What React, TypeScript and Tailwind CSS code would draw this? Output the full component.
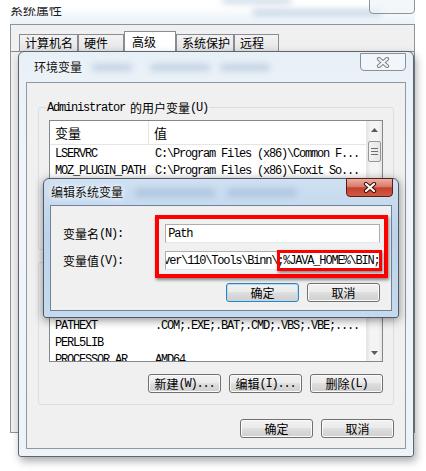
import clsx from "clsx";

const zh = "font-['Noto_Sans_CJK_SC',sans-serif] text-[12px] leading-none";
const mono = "font-['Liberation_Mono','Noto_Sans_CJK_SC',monospace] text-[12px] leading-none tracking-[-1.2px]";

function CloseX({ active }: { active?: boolean }) {
  return (
    <svg width="14" height="11" viewBox="0 0 14 11">
      <path d="M3 2 L11 9 M11 2 L3 9" stroke={active ? "#3b0d08" : "#7d8288"} strokeWidth="4.2" strokeLinecap="round" />
      <path d="M3 2 L11 9 M11 2 L3 9" stroke={active ? "#ffffff" : "#f3f4f6"} strokeWidth="2.2" strokeLinecap="round" />
    </svg>
  );
}

// blurred shapes seen through the aero glass
function Blur({ w, className }: { w: number; className?: string }) {
  return <div className={clsx("h-[7px] rounded-full bg-[#4b77ad]/25 blur-[3px]", className)} style={{ width: w }} />;
}

function Btn({ label, hint, focus }: { label: string; hint?: string; focus?: boolean }) {
  return (
    <div
      className={clsx(
        "flex h-[19px] w-[73px] items-center justify-center rounded-[3px] border bg-[linear-gradient(#f2f2f2,#ebebeb_45%,#dddddd_52%,#cfcfcf)] text-black",
        focus ? "border-[#3c7fb1] shadow-[inset_0_0_0_1px_#a8e0f8]" : "border-[#707070] shadow-[inset_0_0_0_1px_#fbfbfb]"
      )}
    >
      <span className={zh}>{label}</span>
      {hint && <span className={mono}>{hint}</span>}
    </div>
  );
}

function Arrow({ down }: { down?: boolean }) {
  return (
    <div className="flex h-[17px] items-center justify-center">
      <svg width="7" height="4" viewBox="0 0 7 4">
        <path d={down ? "M0 0 L7 0 L3.5 4Z" : "M0 4 L7 4 L3.5 0Z"} fill="#5a5a5a" />
      </svg>
    </div>
  );
}

function ScrollBar({ thumb }: { thumb?: boolean }) {
  return (
    <div className="flex w-[16px] flex-col border-l border-[#e8e8e8] bg-[linear-gradient(90deg,#e6e6e6,#f4f4f4_25%,#f4f4f4_75%,#e6e6e6)]">
      <Arrow />
      {thumb && (
        <div className="mx-[1px] mt-[3px] flex h-[21px] flex-col items-center justify-center gap-[2px] rounded-[2px] border border-[#979797] bg-[linear-gradient(90deg,#f3f3f3,#e6e6e6)]">
          <div className="h-[1px] w-[7px] bg-[#6f6f6f]" />
          <div className="h-[1px] w-[7px] bg-[#6f6f6f]" />
          <div className="h-[1px] w-[7px] bg-[#6f6f6f]" />
        </div>
      )}
      <div className="flex-1" />
      <Arrow down />
    </div>
  );
}

function VarList({ rows, thumb, skip = 0 }: { rows: [string, string][]; thumb?: boolean; skip?: number }) {
  return (
    <div className="flex h-[87px] border border-[#828790] bg-white">
      <div className="flex-1 overflow-hidden">
        <div className="flex h-[24px] border-b border-[#e5e5e5]">
          <div className={clsx(zh, "flex w-[99px] items-center border-r border-[#e5e5e5] pl-[5px] text-[13px]")}>变量</div>
          <div className={clsx(zh, "flex flex-1 items-center pl-[5px] text-[13px]")}>值</div>
        </div>
        {/* rows hidden behind the edit dialog */}
        <div style={{ height: skip * 17 }} />
        {rows.map(([name, value]) => (
          <div key={name} className="flex h-[17px] items-center whitespace-nowrap text-black">
            <div className={clsx(mono, "w-[100px] overflow-hidden pl-[5px]")}>{name}</div>
            <div className={clsx(mono, "flex-1 overflow-hidden pl-[5px]")}>{value}</div>
          </div>
        ))}
      </div>
      <ScrollBar thumb={thumb} />
    </div>
  );
}

function Group({ children, title, className }: { children: React.ReactNode; title?: React.ReactNode; className?: string }) {
  return (
    <div className={clsx("relative rounded-[3px] border border-[#d5dfe5] px-[10px] pb-[11px] pt-[12px]", className)}>
      {title && <div className="absolute left-[7px] top-[-8px] flex h-[16px] items-center bg-[#f0f0f0] px-[1px]">{title}</div>}
      {children}
    </div>
  );
}

const tabs = [
  { t: "计算机名", w: "w-[59px]" },
  { t: "硬件", w: "w-[46px]" },
  { t: "高级", w: "w-[52px]", on: true },
  { t: "系统保护", w: "w-[58px]" },
  { t: "远程", w: "w-[45px]" },
];

export default function App() {
  return (
    <div className="relative h-[471px] w-[426px] overflow-hidden bg-white">
      {/* 系统属性 (behind) */}
      <div className="absolute left-[10px] top-[-16px] flex h-[449px] w-[405px] flex-col">
        <div className="relative flex h-[40px] items-end gap-[20px] bg-[linear-gradient(#ffffff,#ffffff_55%,#eaf1f8)] pb-[8px]">
          <div className="flex h-[9px] items-end overflow-hidden">
            <span className={clsx(zh, "text-[13px] text-[#1e1e1e]")}>系统属性</span>
          </div>
          <div className="flex flex-1 flex-col gap-[5px]">
            <Blur w={70} className="ml-[140px]" />
            <Blur w={130} className="ml-[170px]" />
          </div>
          <div className="absolute right-[0px] top-[12px] h-[18px] w-[46px] rounded-b-[4px] border border-[#8c949c] bg-[#eef3f8]/70" />
        </div>
        <div className="flex-1 border border-[#8d949b] bg-[#f0f0f0]">
          <div className="ml-[8px] mt-[6px] flex h-[20px] items-end">
            {tabs.map((tab) => (
              <div
                key={tab.t}
                className={clsx(
                  zh,
                  "flex items-center border border-b-0 border-[#898c95] text-black",
                  tab.w,
                  tab.on ? "h-[20px] bg-white pl-[7px]" : "h-[17px] bg-[linear-gradient(#f3f3f3,#e4e4e4)] pl-[5px]"
                )}
              >
                {tab.t}
              </div>
            ))}
          </div>
          <div className="h-[1px] bg-[#898c95]" />
        </div>
      </div>

      {/* 环境变量 */}
      <div className="absolute left-[18px] top-[51px] flex h-[406px] w-[396px] flex-col rounded-t-[6px] rounded-b-[3px] border border-[#5d6670] bg-[linear-gradient(#e8f0f7,#f1f5f9_30%,#eef3f8)] px-[7px] pb-[7px] shadow-[2px_4px_8px_rgba(0,0,0,0.35)]">
        <div className="relative flex h-[30px] items-center gap-[10px] pl-[8px]">
          <span className={clsx(zh, "text-[12px] text-[#111] [text-shadow:0_0_6px_#fff]")}>环境变量</span>
          <Blur w={40} />
          <Blur w={60} className="ml-[8px]" />
          <Blur w={50} />
          <div className="absolute right-[0px] top-[1px] flex h-[18px] w-[46px] items-center justify-center rounded-b-[4px] border border-[#8a9097] bg-[#f4f7fa]/80">
            <CloseX />
          </div>
        </div>
        <div className="flex flex-1 flex-col border border-[#8e99a5] bg-[#f0f0f0]">
          <Group
            className="mx-[11px] mt-[24px]"
            title={
              <>
                <span className={mono}>Administrator</span>
                <span className={clsx(zh, "ml-[5px]")}>的用户变量</span>
                <span className={mono}>(U)</span>
              </>
            }
          >
            <VarList
              thumb
              rows={[
                ["LSERVRC", "C:\\Program Files (x86)\\Common F..."],
                ["MOZ_PLUGIN_PATH", "C:\\Program Files (x86)\\Foxit So..."],
              ]}
            />
            <div className="mt-[12px] h-[19px]" />
          </Group>
          <Group className="mx-[11px] mt-[12px]">
            <VarList
              skip={1}
              rows={[
                ["PATHEXT", ".COM;.EXE;.BAT;.CMD;.VBS;.VBE;...."],
                ["PERL5LIB", ""],
                ["PROCESSOR_AR...", "AMD64"],
              ]}
            />
            <div className="mt-[12px] flex justify-end gap-[8px]">
              <Btn label="新建" hint="(W)..." />
              <Btn label="编辑" hint="(I)..." />
              <Btn label="删除" hint="(L)" />
            </div>
          </Group>
          <div className="mt-[14px] flex justify-end gap-[8px] px-[11px]">
            <Btn label="确定" />
            <Btn label="取消" />
          </div>
        </div>
      </div>

      {/* 编辑系统变量 */}
      <div className="absolute left-[43px] top-[178px] flex h-[140px] w-[356px] flex-col rounded-t-[6px] rounded-b-[3px] border border-[#4f5a66] bg-[linear-gradient(#cfe0f1,#bcd3ea_40%,#c6daee)] px-[6px] pb-[6px] shadow-[0_2px_10px_rgba(0,0,0,0.45)]">
        <div className="relative flex h-[26px] items-center gap-[12px] pl-[1px]">
          <span className={clsx(zh, "text-[12px] text-[#111] [text-shadow:0_0_5px_#fff,0_0_9px_#fff]")}>编辑系统变量</span>
          <Blur w={80} className="bg-[#2d5b93]/30" />
          <Blur w={70} className="bg-[#2d5b93]/20" />
          <div className="absolute right-[-1px] top-[-1px] flex h-[19px] w-[47px] items-center justify-center rounded-b-[4px] border border-[#5b1d16] bg-[linear-gradient(#eab0a3,#d67b69_45%,#c4412c_52%,#cf5a42)]">
            <CloseX active />
          </div>
        </div>
        <div className="relative flex-1 border border-[#6f8299] bg-[#f0f0f0] pl-[12px] pr-[11px] pt-[18px]">
          <div className="flex h-[19px] items-center">
            <div className="flex w-[103px] items-center">
              <span className={zh}>变量名</span>
              <span className={mono}>(N):</span>
            </div>
            <div className="flex h-[19px] w-[216px] items-center border border-[#abadb3] border-b-[#e3e9ef] bg-white pl-[2px]">
              <span className={mono}>Path</span>
            </div>
          </div>
          <div className="mt-[8px] flex h-[19px] items-center">
            <div className="flex w-[103px] items-center">
              <span className={zh}>变量值</span>
              <span className={mono}>(V):</span>
            </div>
            <div className="flex h-[19px] w-[216px] items-center overflow-hidden whitespace-nowrap border border-[#abadb3] border-b-[#e3e9ef] bg-white">
              <span className={clsx(mono, "-ml-[3px]")}>ver\110\Tools\Binn\;%JAVA_HOME%\BIN;</span>
              <span className="h-[13px] w-[1px] bg-black" />
            </div>
          </div>
          <div className="mt-[13px] flex justify-end gap-[8px]">
            <Btn label="确定" focus />
            <Btn label="取消" />
          </div>
          {/* red annotation boxes */}
          <div className="absolute left-[104px] top-[9px] h-[63px] w-[233px] border-[4px] border-[#ff0000] shadow-[1px_2px_3px_rgba(0,0,0,0.45)]" />
          <div className="absolute left-[226px] top-[44px] h-[21px] w-[105px] border-[3px] border-[#ff0000] shadow-[1px_2px_3px_rgba(0,0,0,0.45)]" />
        </div>
      </div>
    </div>
  );
}
